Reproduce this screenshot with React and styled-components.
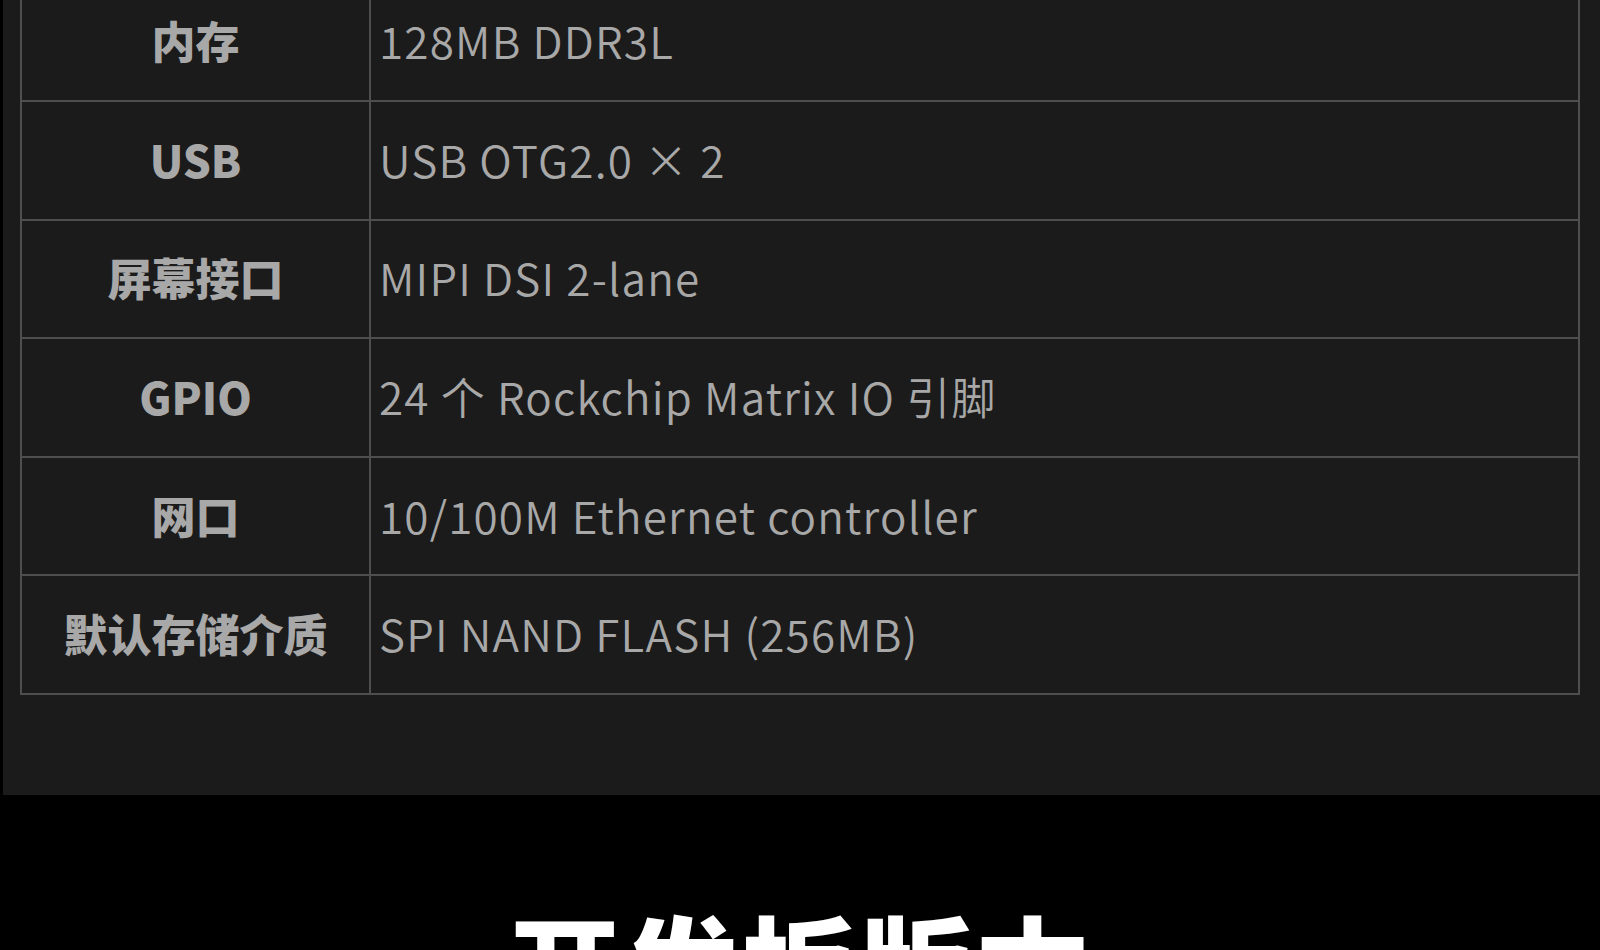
import React from "react";
import styled, { createGlobalStyle } from "styled-components";

const Global = createGlobalStyle`
  html, body { margin: 0; padding: 0; background: #000; }
  body { font-family: "Noto Sans CJK SC", "Noto Sans", sans-serif; overflow: hidden; }
`;

const Page = styled.div`
  width: 1600px;
  height: 950px;
  overflow: hidden;
  background: #000;
  display: flex;
  flex-direction: column;
`;

const Panel = styled.section`
  margin-left: 3px;
  background: #1b1b1b;
  padding: 0 20px 100px 17px;
  height: 795px;
  box-sizing: border-box;
  display: flex;
  flex-direction: column;
  justify-content: flex-end;
`;

const Table = styled.div`
  display: grid;
  grid-template-columns: 349px 1fr;
  border-left: 2px solid #4e4e4e;
  border-right: 2px solid #4e4e4e;
`;

const Cell = styled.div`
  height: 118.6px;
  box-sizing: border-box;
  border-bottom: 2px solid #4e4e4e;
  display: flex;
  align-items: center;
  padding-bottom: 3px;
  color: #a8a8a8;
`;

const Label = styled(Cell)`
  justify-content: center;
  border-right: 2px solid #4e4e4e;
  font-size: 44px;
  font-weight: 900;
`;

const Value = styled(Cell)`
  padding-left: 8px;
  font-size: 44px;
  font-weight: 350;
  letter-spacing: 1.2px;
`;

const Bottom = styled.section`
  flex: 1;
  display: flex;
  justify-content: center;
  padding-top: 112px;
`;

const Heading = styled.h2`
  margin: 0;
  color: #fff;
  font-size: 114px;
  font-weight: 900;
  line-height: 1;
  letter-spacing: 3px;
`;

const rows = [
  ["内存", "128MB DDR3L"],
  ["USB", "USB OTG2.0 × 2"],
  ["屏幕接口", "MIPI DSI 2-lane"],
  ["GPIO", "24 个 Rockchip Matrix IO 引脚"],
  ["网口", "10/100M Ethernet controller"],
  ["默认存储介质", "SPI NAND FLASH (256MB)"],
];

export default function App() {
  return (
    <Page>
      <Global />
      <Panel>
        <Table>
          {rows.map(([k, v]) => (
            <React.Fragment key={k}>
              <Label>{k}</Label>
              <Value>{v}</Value>
            </React.Fragment>
          ))}
        </Table>
      </Panel>
      <Bottom>
        <Heading>开发板版本</Heading>
      </Bottom>
    </Page>
  );
}
